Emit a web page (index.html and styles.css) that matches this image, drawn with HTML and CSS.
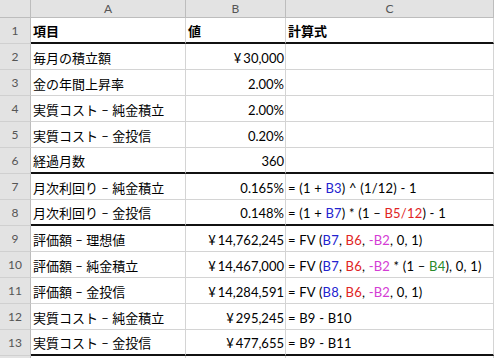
FILE: index.html
```html
<!DOCTYPE html>
<html lang="ja">
<head>
<meta charset="utf-8">
<link rel="stylesheet" href="styles.css">
</head>
<body>
<div class="sheet">
  <div class="corner"></div>
  <div class="colhead">A</div>
  <div class="colhead">B</div>
  <div class="colhead">C</div>

  <div class="rowhead">1</div>
  <div class="cell bold thick"><span>項目</span></div>
  <div class="cell bold thick"><span>値</span></div>
  <div class="cell bold thick"><span>計算式</span></div>

  <div class="rowhead">2</div>
  <div class="cell"><span>毎月の積立額</span></div>
  <div class="cell num"><span><span class="yen">¥</span>30,000</span></div>
  <div class="cell"></div>

  <div class="rowhead">3</div>
  <div class="cell"><span>金の年間上昇率</span></div>
  <div class="cell num"><span>2.00%</span></div>
  <div class="cell"></div>

  <div class="rowhead">4</div>
  <div class="cell"><span>実質コスト – 純金積立</span></div>
  <div class="cell num"><span>2.00%</span></div>
  <div class="cell"></div>

  <div class="rowhead">5</div>
  <div class="cell"><span>実質コスト – 金投信</span></div>
  <div class="cell num"><span>0.20%</span></div>
  <div class="cell"></div>

  <div class="rowhead">6</div>
  <div class="cell thick"><span>経過月数</span></div>
  <div class="cell num thick"><span>360</span></div>
  <div class="cell thick"></div>

  <div class="rowhead">7</div>
  <div class="cell"><span>月次利回り – 純金積立</span></div>
  <div class="cell num"><span>0.165%</span></div>
  <div class="cell formula"><span>= (1 + <span class="blue">B3</span>) ^ (1/12) - 1</span></div>

  <div class="rowhead">8</div>
  <div class="cell thick"><span>月次利回り – 金投信</span></div>
  <div class="cell num thick"><span>0.148%</span></div>
  <div class="cell formula thick"><span>= (1 + <span class="blue">B7</span>) * (1 – <span class="red">B5/12</span>) - 1</span></div>

  <div class="rowhead">9</div>
  <div class="cell"><span>評価額 – 理想値</span></div>
  <div class="cell num"><span><span class="yen">¥</span>14,762,245</span></div>
  <div class="cell formula"><span>= FV (<span class="blue">B7</span>, <span class="red">B6</span>, <span class="pink">-B2</span>, 0, 1)</span></div>

  <div class="rowhead">10</div>
  <div class="cell"><span>評価額 – 純金積立</span></div>
  <div class="cell num"><span><span class="yen">¥</span>14,467,000</span></div>
  <div class="cell formula"><span>= FV (<span class="blue">B7</span>, <span class="red">B6</span>, <span class="pink">-B2</span> * (1 – <span class="green">B4</span>), 0, 1)</span></div>

  <div class="rowhead">11</div>
  <div class="cell"><span>評価額 – 金投信</span></div>
  <div class="cell num"><span><span class="yen">¥</span>14,284,591</span></div>
  <div class="cell formula"><span>= FV (<span class="blue">B8</span>, <span class="red">B6</span>, <span class="pink">-B2</span>, 0, 1)</span></div>

  <div class="rowhead">12</div>
  <div class="cell"><span>実質コスト – 純金積立</span></div>
  <div class="cell num"><span><span class="yen">¥</span>295,245</span></div>
  <div class="cell formula"><span>= B9 - B10</span></div>

  <div class="rowhead">13</div>
  <div class="cell thick"><span>実質コスト – 金投信</span></div>
  <div class="cell num thick"><span><span class="yen">¥</span>477,655</span></div>
  <div class="cell formula thick"><span>= B9 - B11</span></div>

  <div class="rowhead"></div>
  <div class="cell"></div>
  <div class="cell"></div>
  <div class="cell"></div>
</div>
</body>
</html>
```
FILE: styles.css
```css
html, body {
  margin: 0;
  padding: 0;
  background: #ffffff;
}

.sheet {
  display: grid;
  grid-template-columns: 31px 155px 100px 208px;
  grid-template-rows: 18px repeat(13, 26px) 26px;
  width: 494px;
  height: 358px;
  overflow: hidden;
  font-family: "Lato", "Noto Sans CJK JP", sans-serif;
  font-size: 13px;
  color: #000;
}

.corner,
.colhead,
.rowhead {
  box-sizing: border-box;
  background: #e3e3e3;
  color: #555;
  font-family: "Lato", sans-serif;
  font-size: 12px;
  display: flex;
  justify-content: center;
}

.corner {
  border-right: 1px solid #bdbdbd;
  border-bottom: 1px solid #bdbdbd;
}

.colhead {
  border-right: 1px solid #bdbdbd;
  border-bottom: 1px solid #bdbdbd;
  align-items: center;
  line-height: 1;
  padding-top: 1px;
}

.rowhead {
  border-right: 1px solid #bdbdbd;
  border-bottom: 1px solid #d0d0d0;
  align-items: flex-end;
  padding-bottom: 6px;
  line-height: 1;
}

.cell {
  box-sizing: border-box;
  border-right: 1px solid #d4d4d4;
  border-bottom: 1px solid #d4d4d4;
  display: flex;
  align-items: flex-end;
  padding: 0 2px 3px 2px;
  line-height: 16px;
  white-space: nowrap;
  overflow: hidden;
}

.cell.formula {
  letter-spacing: 0.2px;
}

.cell.thick {
  border-bottom: 2px solid #111;
}

.cell.num {
  justify-content: flex-end;
  padding-right: 1px;
}

.yen {
  margin-right: 2px;
}

.bold {
  font-weight: bold;
}

.blue { color: #2323cf; }
.red { color: #e02424; }
.pink { color: #d43cd4; }
.green { color: #2a8a2a; }
```
